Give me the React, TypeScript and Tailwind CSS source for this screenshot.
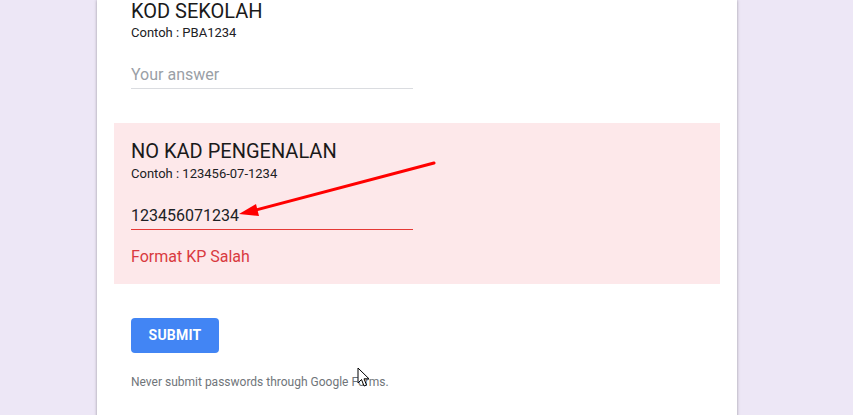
import React from 'react';

const Arrow = () => (
  <svg className="absolute left-0 top-0 pointer-events-none" width="853" height="415" viewBox="0 0 853 415">
    <line x1="434" y1="163" x2="252" y2="211" stroke="#ff0000" strokeWidth="3" strokeLinecap="round" />
    <polygon points="239,214 256,204 259,216" fill="#ff0000" />
  </svg>
);

const Cursor = () => (
  <svg className="absolute left-[357px] top-[367px]" width="14" height="21" viewBox="0 0 14 21">
    <path d="M1 1 L1 16 L4.5 12.5 L7 19 L9.5 18 L7 11.8 L12 11.8 Z" fill="#ffffff" stroke="#000000" strokeWidth="1" strokeLinejoin="round" />
  </svg>
);

export default function App() {
  return (
    <div className="relative h-[415px] overflow-hidden bg-[#ede7f6] font-['Roboto',_'Liberation_Sans',_sans-serif]">
      <div className="ml-[97px] w-[640px] h-[440px] bg-white pt-px shadow-[0_0_3px_rgba(0,0,0,0.35)]">
        {/* KOD SEKOLAH */}
        <div className="px-[34px] -mt-[2px]">
          <div className="text-[20px] leading-[24px] text-[#1a1a1a]">KOD SEKOLAH</div>
          <div className="mt-[2px] text-[13px] leading-[16px] text-[#202124]">Contoh : PBA1234</div>
          <div className="mt-[22px] w-[282px] pb-px text-[16px] leading-[24px] text-[#9aa0a6]">Your answer</div>
          <div className="h-px w-[282px] bg-[#dadce0]" />
        </div>

        {/* NO KAD PENGENALAN (error) */}
        <div className="mx-[17px] mt-[34px] bg-[#fde8ea] px-[17px] pt-[16px] pb-[15px]">
          <div className="text-[20px] leading-[24px] text-[#1a1a1a]">NO KAD PENGENALAN</div>
          <div className="mt-[3px] text-[13px] leading-[16px] text-[#202124]">Contoh : 123456-07-1234</div>
          <div className="mt-[22px] w-[282px] pb-px text-[16px] leading-[24px] text-[#202124]">123456071234</div>
          <div className="h-px w-[282px] bg-[#e53935]" />
          <div className="mt-[15px] text-[16px] leading-[24px] text-[#d93a3f]">Format KP Salah</div>
        </div>

        {/* Submit */}
        <div className="px-[34px] pt-[34px]">
          <button className="flex h-[35px] w-[88px] items-center justify-center rounded-[4px] bg-[#4285f4] text-[14px] font-bold tracking-[0.2px] text-white">
            SUBMIT
          </button>
          <div className="mt-[21px] text-[12px] leading-[16px] text-[#70757a]">
            Never submit passwords through Google Forms.
          </div>
        </div>
      </div>
      <Arrow />
      <Cursor />
    </div>
  );
}
